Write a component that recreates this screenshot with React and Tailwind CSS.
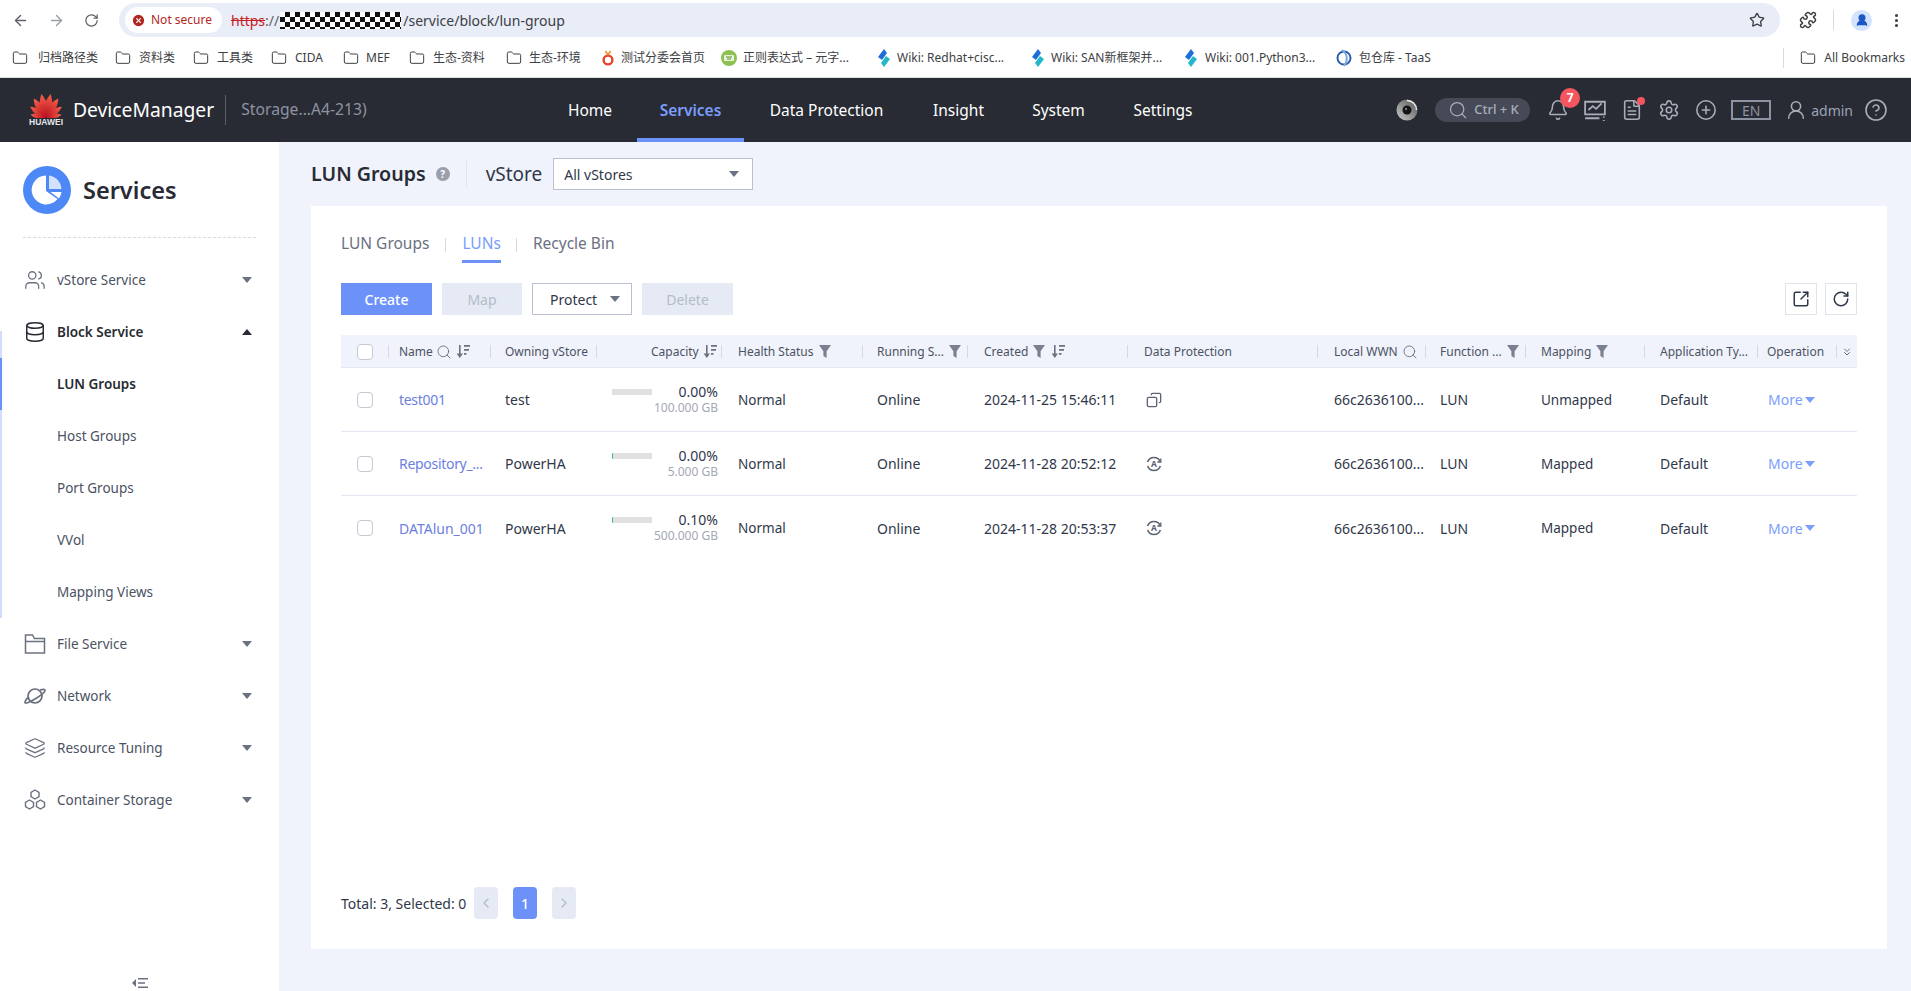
import React from 'react';
import {
  ArrowLeft, ArrowRight, RotateCw, Star, Puzzle, MoreVertical, Folder, Search, Bell,
  Settings, CirclePlus, UserRound, CircleHelp, Users, Database, Layers, FileText,
  ChevronLeft, ChevronRight, ChevronsDown, Copy, SquareArrowOutUpRight, XCircle,
} from 'lucide-react';

const cols = 'grid grid-cols-[48px_102px_106px_125px_141px_105px_160px_190px_108px_100px_119px_113px_79px_20px]';

const bookmarks = [
  { name: '归档路径类', w: 'w-[103px] gap-[10px]' },
  { name: '资料类', w: 'w-[78px] gap-[8px]' },
  { name: '工具类', w: 'w-[78px] gap-[8px]' },
  { name: 'CIDA', w: 'w-[72px] gap-[8px]' },
  { name: 'MEF', w: 'w-[66px] gap-[7px]' },
  { name: '生态-资料', w: 'w-[97px] gap-[8px]' },
  { name: '生态-环境', w: 'w-[94px] gap-[7px]' },
  { name: '测试分委会首页', w: 'w-[121px] gap-[5px]', icon: 'red' },
  { name: '正则表达式 – 元字...', w: 'w-[155px] gap-[6px]', icon: 'green' },
  { name: 'Wiki: Redhat+cisc...', w: 'w-[154px] gap-[5px]', icon: 'wiki' },
  { name: 'Wiki: SAN新框架并...', w: 'w-[153px] gap-[5px]', icon: 'wiki' },
  { name: 'Wiki: 001.Python3...', w: 'w-[153px] gap-[6px]', icon: 'wiki' },
  { name: '包仓库 - TaaS', w: 'w-[120px] gap-[7px]', icon: 'taas' },
];

const BookmarkIcon = ({ type }) => {
  if (type === 'red') {
    return (
      <svg viewBox="0 0 16 16" className="w-4 h-4 shrink-0" fill="none">
        <circle cx="8" cy="10" r="4.4" stroke="#e8402c" strokeWidth="2.4" />
        <path d="M8 5 L5.5 1 M8 5 L10.5 1" stroke="#f28b2c" strokeWidth="1.6" />
      </svg>
    );
  }
  if (type === 'green') {
    return (
      <svg viewBox="0 0 16 16" className="w-4 h-4 shrink-0">
        <circle cx="8" cy="8" r="8" fill="#8cc152" />
        <rect x="3" y="5" width="10" height="6" rx="1" fill="#e8f3da" />
        <path d="M5 7h6M6 9h4" stroke="#5b8f2a" strokeWidth="1" />
      </svg>
    );
  }
  if (type === 'wiki') {
    return (
      <svg viewBox="0 0 16 18" className="w-4 h-[18px] shrink-0">
        <path d="M8 0 L2 8 L6 11 L11 4 Z" fill="#1c6fd8" />
        <path d="M8 18 L14 10 L10 7 L5 14 Z" fill="#22b8c9" />
      </svg>
    );
  }
  if (type === 'taas') {
    return (
      <svg viewBox="0 0 16 18" className="w-4 h-[18px] shrink-0" fill="none">
        <circle cx="8" cy="9" r="6.5" stroke="#2a5db0" strokeWidth="2" />
        <path d="M6 1 C12 5 12 12 8 17" stroke="#7fa8de" strokeWidth="2" />
      </svg>
    );
  }
  return <Folder size={16} strokeWidth={1.5} className="shrink-0 text-[#3c4043]" />;
};

const BrowserBar = () => (
  <div className="h-[78px] shrink-0 bg-white border-b border-[#dcdde0]">
    <div className="h-[40px] flex items-center pr-[6px]">
      <div className="w-[119px] flex items-center pl-[12px] gap-[19px] text-[#5f6368]">
        <ArrowLeft size={17} strokeWidth={2} />
        <ArrowRight size={17} strokeWidth={2} className="text-[#9aa0a6]" />
        <RotateCw size={15} strokeWidth={2} />
      </div>
      <div className="w-[1661px] h-[34px] rounded-full bg-[#e9edf8] flex items-center pl-[6px] pr-[15px]">
        <div className="h-[26px] w-[97px] rounded-full bg-white flex items-center gap-[5px] pl-[6px] text-[12px] text-[#b3261e] whitespace-nowrap">
          <XCircle size={15} fill="#b3261e" stroke="#fff" strokeWidth={2} className="shrink-0" />
          Not secure
        </div>
        <span className="ml-[9px] text-[14px] text-[#c5221f] line-through">https</span>
        <span className="text-[14px] text-[#5f6368]">://</span>
        <span className="w-[121px] h-[17px] ml-px bg-[repeating-conic-gradient(#111_0_25%,#fff_0_50%)] bg-[length:10px_10px]" />
        <span className="ml-[2px] text-[14px] text-[#3c4043]">/service/block/lun-group</span>
        <Star size={16} strokeWidth={2} className="ml-auto text-[#3c4043]" />
      </div>
      <div className="flex-1 flex items-center pl-[19px] text-[#3c4043]">
        <Puzzle size={18} strokeWidth={2} />
        <span className="w-px h-[20px] ml-[16px] bg-[#d5dbe8]" />
        <span className="ml-[17px] w-[21px] h-[21px] rounded-full bg-[#d3e3fd] flex items-center justify-center">
          <UserRound size={14} fill="#1a56c4" stroke="#1a56c4" />
        </span>
        <MoreVertical size={17} strokeWidth={2.4} className="ml-[16px]" />
      </div>
    </div>
    <div className="h-[35px] flex items-center pl-[12px] pr-[6px] text-[12px] text-[#3c4043]">
      {bookmarks.map((b) => (
        <div key={b.name} className={`${b.w} flex items-center whitespace-nowrap`}>
          <BookmarkIcon type={b.icon} />
          <span>{b.name}</span>
        </div>
      ))}
      <span className="ml-auto w-px h-[20px] mr-[16px] bg-[#d5dbe8]" />
      <div className="flex items-center gap-2">
        <Folder size={16} strokeWidth={1.5} />
        <span>All Bookmarks</span>
      </div>
    </div>
  </div>
);

const petals = [
  { a: -80, s: 0.66 },
  { a: -56, s: 0.8 },
  { a: -33, s: 0.94 },
  { a: -11, s: 1 },
  { a: 11, s: 1 },
  { a: 33, s: 0.94 },
  { a: 56, s: 0.8 },
  { a: 80, s: 0.66 },
];

const HuaweiLogo = () => (
  <div className="w-[36px] flex flex-col items-center">
    <svg viewBox="0 0 36 25" className="w-[36px] h-[25px]">
      <defs>
        <linearGradient id="petal" x1="0" y1="0" x2="0" y2="1">
          <stop offset="0" stopColor="#f8604a" />
          <stop offset="1" stopColor="#b8101f" />
        </linearGradient>
      </defs>
      {petals.map((p) => (
        <path
          key={p.a}
          d="M0 0 C-5.4 -8, -4.6 -16, 0 -24 C4.6 -16, 5.4 -8, 0 0 Z"
          fill="url(#petal)"
          transform={`translate(18 24.5) rotate(${p.a}) scale(${p.s})`}
        />
      ))}
    </svg>
    <span className="text-[8.5px] leading-[9px] font-bold text-[#e4e5e8] font-['Liberation_Sans',sans-serif]">HUAWEI</span>
  </div>
);

const navItems = [
  { label: 'Home', w: 'w-[94px]' },
  { label: 'Services', w: 'w-[107px]', active: true },
  { label: 'Data Protection', w: 'w-[165px]' },
  { label: 'Insight', w: 'w-[99px]' },
  { label: 'System', w: 'w-[101px]' },
  { label: 'Settings', w: 'w-[108px]' },
];

const AppHeader = () => (
  <header className="h-16 shrink-0 bg-[#282b33] flex items-center text-white">
    <div className="w-[543px] flex items-center pl-[28px]">
      <HuaweiLogo />
      <span className="ml-[9px] text-[19.3px] whitespace-nowrap">DeviceManager</span>
      <span className="w-px h-[30px] ml-[11px] bg-[#5b5f6a]" />
      <span className="ml-[15px] text-[15.7px] text-[#8d93a2] whitespace-nowrap">Storage...A4-213)</span>
    </div>
    <nav className="flex h-full">
      {navItems.map((n) => (
        <div
          key={n.label}
          className={
            n.active
              ? `${n.w} flex items-center justify-center text-[15.5px] font-semibold text-[#7b9dfb] border-b-4 border-[#6c92fa] pt-[5px]`
              : `${n.w} flex items-center justify-center text-[15.5px] border-b-4 border-transparent pt-[5px]`
          }
        >
          {n.label}
        </div>
      ))}
    </nav>
    <div className="ml-auto flex items-center pr-[23px] text-[#a9aebb]">
      <svg viewBox="0 0 22 22" className="w-[22px] h-[22px]">
        <defs>
          <linearGradient id="lens" x1="1" y1="0" x2="0" y2="1">
            <stop offset="0" stopColor="#555" />
            <stop offset="1" stopColor="#c9c9c9" />
          </linearGradient>
        </defs>
        <circle cx="11" cy="11" r="10.5" fill="url(#lens)" />
        <circle cx="11" cy="11" r="4.5" fill="#141414" />
        <circle cx="10" cy="10" r="1.2" fill="#777" />
        <path d="M11 1.5A9.5 9.5 0 0 1 20.5 11" fill="none" stroke="#eee" strokeWidth="1.4" />
      </svg>
      <div className="ml-[17px] w-[95px] h-6 rounded-full bg-[#464a56] flex items-center pl-[13px] gap-[6px] text-[13px]">
        <Search size={20} strokeWidth={1.5} className="shrink-0" />
        <span className="font-medium whitespace-nowrap">Ctrl + K</span>
      </div>
      <div className="relative ml-[17px]">
        <Bell size={22} strokeWidth={1.7} />
        <span className="absolute -top-[11px] left-[13px] w-5 h-5 rounded-full bg-[#f4555e] text-white text-[12px] font-bold flex items-center justify-center">7</span>
      </div>
      <svg viewBox="0 0 20 20" className="ml-[15px] w-[22px] h-[22px]" fill="none" stroke="currentColor" strokeWidth="1.6">
        <path d="M1 14V2.5h18V14Z" />
        <path d="M4 10l4-3.5 3 2.5 5-5" />
        <path d="M1 17.5h13M18 16v1M18 19v1" />
      </svg>
      <div className="relative ml-[15px]">
        <FileText size={22} strokeWidth={1.7} />
        <span className="absolute -top-[2px] -right-[2px] w-2 h-2 rounded-full bg-[#f4555e]" />
      </div>
      <Settings size={22} strokeWidth={1.7} className="ml-[15px]" />
      <CirclePlus size={22} strokeWidth={1.7} className="ml-[15px]" />
      <div className="ml-[14px] w-10 h-5 border-2 border-[#8d93a2] flex items-center justify-center text-[14px] text-[#8d93a2]">EN</div>
      <UserRound size={22} strokeWidth={1.7} className="ml-[14px]" />
      <span className="ml-[4px] text-[14px] text-[#9aa3b8]">admin</span>
      <CircleHelp size={24} strokeWidth={1.6} className="ml-[11px]" />
    </div>
  </header>
);

const Caret = ({ up, className }) => (
  <span
    className={`w-0 h-0 border-x-[5px] border-x-transparent ${up ? 'border-b-[6px] border-b-[#282b33]' : 'border-t-[6px] border-t-[#6b7180]'} ${className || ''}`}
  />
);

const PlanetIcon = () => (
  <svg viewBox="0 0 22 18" className="w-[22px] h-[18px]" fill="none" stroke="#6b7180" strokeWidth="1.7">
    <circle cx="11" cy="9" r="7" />
    <path d="M16 3c3-1 5-1 5 .5S16 9 11 12 1 17 1 15.5 3 11 5 10" />
  </svg>
);

const HexIcon = () => (
  <svg viewBox="0 0 22 22" className="w-[22px] h-[22px]" fill="none" stroke="#6b7180" strokeWidth="1.4">
    <path d="M11 1l4 2.3v4.4L11 10 7 7.7V3.3Z" />
    <path d="M5.5 11l4 2.3v4.4l-4 2.3-4-2.3v-4.4Z" />
    <path d="M16.5 11l4 2.3v4.4l-4 2.3-4-2.3v-4.4Z" />
  </svg>
);

const FolderIcon = () => (
  <svg viewBox="0 0 22 20" className="w-[22px] h-[20px]" fill="none" stroke="#6b7180" strokeWidth="1.5">
    <path d="M1.5 19V1h7l2 3.5h10V19Z" />
    <path d="M1.5 7.5h19" />
  </svg>
);

const SideGroup = ({ icon, label, open }) => (
  <div className="h-[52px] flex items-center pl-[24px] pr-[27px]">
    <span className="w-[22px] flex justify-center shrink-0">{icon}</span>
    <span className={open ? 'ml-[11px] pt-px text-[13.5px] font-semibold text-[#282b33]' : 'ml-[11px] pt-px text-[13.5px] text-[#4b5263]'}>{label}</span>
    <Caret up={open} className="ml-auto" />
  </div>
);

const subItems = ['LUN Groups', 'Host Groups', 'Port Groups', 'VVol', 'Mapping Views'];

const Sidebar = () => (
  <aside className="w-[279px] shrink-0 bg-white flex flex-col">
    <div className="mx-[23px] h-[96px] pt-6 border-b border-dashed border-[#d8dbe2] flex items-start gap-3">
      <svg viewBox="0 0 48 48" className="w-12 h-12">
        <circle cx="24" cy="24" r="24" fill="#4d88f7" />
        <path d="M23 9.5A14.5 14.5 0 1 0 34.5 33L23 25Z" fill="#fff" />
        <path d="M26 9.5A14.5 14.5 0 0 1 38.5 23H26Z" fill="#fff" opacity="0.75" />
        <path d="M27.5 26H38.5A15 15 0 0 1 36 32.5Z" fill="#fff" />
      </svg>
      <span className="text-[23.5px] leading-[48px] font-semibold text-[#282b33]">Services</span>
    </div>
    <div className="pt-4 flex-1 flex flex-col">
      <SideGroup label="vStore Service" icon={<Users size={24} strokeWidth={1.4} className="text-[#6b7180]" />} />
      <SideGroup label="Block Service" open icon={<Database size={22} strokeWidth={1.6} className="text-[#282b33]" />} />
      <div className="border-l-2 border-[#d3dcfb] -mt-[27px] pt-[27px]">
        {subItems.map((s, i) => (
          <div
            key={s}
            className={
              i === 0
                ? 'h-[52px] -ml-[2px] border-l-2 border-[#6c92fa] pl-[55px] pt-px flex items-center text-[13.5px] font-semibold text-[#282b33]'
                : 'h-[52px] pl-[55px] pt-px flex items-center text-[13.5px] text-[#4b5263]'
            }
          >
            {s}
          </div>
        ))}
      </div>
      <SideGroup label="File Service" icon={<FolderIcon />} />
      <SideGroup label="Network" icon={<PlanetIcon />} />
      <SideGroup label="Resource Tuning" icon={<Layers size={24} strokeWidth={1.4} className="text-[#6b7180]" />} />
      <SideGroup label="Container Storage" icon={<HexIcon />} />
      <div className="mt-auto h-[16px] pt-[3px] flex justify-center">
        <svg viewBox="0 0 16 10" className="w-4 h-[10px]" fill="#6b7180">
          <path d="M0 5l4-4v8Z" />
          <path d="M6 0h10v1.6H6ZM6 4.2h7v1.6H6ZM6 8.4h10V10H6Z" />
        </svg>
      </div>
    </div>
  </aside>
);

const SortIcon = () => (
  <svg viewBox="0 0 14 13" className="w-[14px] h-[13px]" fill="#6b7180">
    <path d="M3 0h1.6v8.5L7 8.5 3.8 13 .6 8.5 3 8.5Z" />
    <path d="M8 0h6v1.8H8ZM8 4h5v1.8H8ZM8 8h2.5v1.8H8Z" />
  </svg>
);

const FilterIcon = () => (
  <svg viewBox="0 0 12 13" className="w-[12px] h-[13px]" fill="#7a8090">
    <path d="M0 0h12L7.6 6.2V13L4.4 11V6.2Z" />
  </svg>
);

const SearchIcon = () => <Search size={16} strokeWidth={1.4} className="text-[#6b7180]" />;

const headers = [
  { pad: 'pl-[16px]', check: true },
  { pad: 'pl-[10px]', label: 'Name', icons: ['search', 'sort'], gap: 'ml-[3px] gap-[4px]' },
  { pad: 'pl-[14px]', label: 'Owning vStore' },
  { pad: 'pl-[54px]', label: 'Capacity', icons: ['sort'], gap: 'ml-[4px] gap-[6px]' },
  { pad: 'pl-[16px]', label: 'Health Status', icons: ['filter'], gap: 'ml-[5px] gap-[6px]' },
  { pad: 'pl-[14px]', label: 'Running S...', icons: ['filter'], gap: 'ml-[5px] gap-[6px]' },
  { pad: 'pl-[16px]', label: 'Created', icons: ['filter', 'sort'], gap: 'ml-[5px] gap-[6px]' },
  { pad: 'pl-[16px]', label: 'Data Protection' },
  { pad: 'pl-[16px]', label: 'Local WWN', icons: ['search'], gap: 'ml-[4px] gap-[6px]' },
  { pad: 'pl-[14px]', label: 'Function ...', icons: ['filter'], gap: 'ml-[5px] gap-[6px]' },
  { pad: 'pl-[15px]', label: 'Mapping', icons: ['filter'], gap: 'ml-[5px] gap-[6px]' },
  { pad: 'pl-[15px]', label: 'Application Ty...' },
  { pad: 'pl-[9px]', label: 'Operation' },
];

const headIcon = { search: <SearchIcon />, sort: <SortIcon />, filter: <FilterIcon /> };

const rows = [
  { name: 'test001', nameCls: 'tracking-[-0.3px]', store: 'test', pct: '0.00%', size: '100.000 GB', created: '2024-11-25 15:46:11', prot: 'copy', map: 'Unmapped', used: false },
  { name: 'Repository_...', nameCls: 'tracking-[-0.3px]', store: 'PowerHA', pct: '0.00%', size: '5.000 GB', created: '2024-11-28 20:52:12', prot: 'auto', map: 'Mapped', used: true },
  { name: 'DATAlun_001', nameCls: '', store: 'PowerHA', pct: '0.10%', size: '500.000 GB', created: '2024-11-28 20:53:37', prot: 'auto', map: 'Mapped', used: true },
];

const AutoIcon = () => (
  <svg viewBox="0 0 16 16" className="w-4 h-4" fill="none" stroke="#5d6373" strokeWidth="1.6">
    <path d="M1.6 6a6.8 6.8 0 0 1 12.8 0" />
    <path d="M14.4 10a6.8 6.8 0 0 1-12.8 0" />
    <path d="M14.8 2.5V6H11.3" strokeWidth="1.3" />
    <text x="8" y="11.2" textAnchor="middle" fontSize="8.5" fontWeight="700" fill="#5d6373" stroke="none">A</text>
  </svg>
);

const Checkbox = () => <span className="block w-4 h-4 rounded-sm border border-[#c5c9d3] bg-white" />;

const LunTable = () => (
  <div className="mt-5 text-[14px] text-[#30384a]">
    <div className={`${cols} h-[33px] pt-px bg-[#f0f3fb] border-b border-[#e4e8f2] text-[12px] text-[#4b5263]`}>
      {headers.map((h, i) => (
        <div key={i} className={`${h.pad} flex items-center min-w-0 whitespace-nowrap`}>
          {h.check ? <Checkbox /> : <span>{h.label}</span>}
          {h.icons && <span className={`${h.gap} flex items-center`}>{h.icons.map((k) => <React.Fragment key={k}>{headIcon[k]}</React.Fragment>)}</span>}
          <span className="ml-auto shrink-0 w-px h-[13px] bg-[#d5d9e3]" />
        </div>
      ))}
      <div className="flex items-center justify-center text-[#6b7180]">
        <ChevronsDown size={12} strokeWidth={2} />
      </div>
    </div>
    {rows.map((r, i) => (
      <div key={r.name} className={i < rows.length - 1 ? `${cols} h-16 border-b border-[#e4e8f2] items-center` : `${cols} h-16 items-center`}>
        <div className="pl-[16px]"><Checkbox /></div>
        <div className={`pl-[10px] text-[#6c7fe0] whitespace-nowrap ${r.nameCls}`}>{r.name}</div>
        <div className="pl-[14px]">{r.store}</div>
        <div className="pl-[15px] pr-[4px] -mt-[2px] flex">
          <span className={r.used ? 'mt-[6px] w-[40px] h-[6px] bg-[#e0e0e0] border-l border-[#4cc38a]' : 'mt-[6px] w-[40px] h-[6px] bg-[#e0e0e0]'} />
          <div className="ml-auto text-right">
            <div className="leading-[18px]">{r.pct}</div>
            <div className="leading-[14px] text-[12px] text-[#a3a8b3]">{r.size}</div>
          </div>
        </div>
        <div className="pl-[16px] pt-px text-[13.5px]">Normal</div>
        <div className="pl-[14px]">Online</div>
        <div className="pl-[16px] whitespace-nowrap">{r.created}</div>
        <div className="pl-[18px]">
          {r.prot === 'copy' ? <Copy size={16} strokeWidth={2} className="text-[#5d6373] -scale-x-100" /> : <AutoIcon />}
        </div>
        <div className="pl-[16px] whitespace-nowrap">66c2636100...</div>
        <div className="pl-[14px]">LUN</div>
        <div className="pl-[15px] pt-px text-[13.5px]">{r.map}</div>
        <div className="pl-[15px]">Default</div>
        <div className="pl-[10px] flex items-center gap-[2px] text-[#7b9dfb]">
          More
          <span className="w-0 h-0 border-x-[5px] border-x-transparent border-t-[6px] border-t-[#7b9dfb]" />
        </div>
        <div />
      </div>
    ))}
  </div>
);

const Main = () => (
  <main className="flex-1 min-w-0 bg-[#f0f3fb] pl-[32px] pr-[24px] pt-4 pb-[42px] flex flex-col">
    <div className="h-8 flex items-center shrink-0">
      <h1 className="text-[19.6px] font-semibold text-[#282b33]">LUN Groups</h1>
      <span className="ml-[10px] w-[14px] h-[14px] rounded-full bg-[#9a9fab] text-white text-[10px] font-bold flex items-center justify-center">?</span>
      <span className="ml-[16px] w-px h-[26px] bg-[#e0e4ee]" />
      <span className="ml-[19px] text-[19px] text-[#30384a]">vStore</span>
      <div className="ml-[11px] w-[200px] h-8 border border-[#b8c0d2] bg-white flex items-center pl-[10px] pr-[13px] text-[14px] text-[#30384a]">
        All vStores
        <Caret className="ml-auto" />
      </div>
    </div>
    <section className="mt-4 flex-1 bg-white px-[30px] pb-[30px] flex flex-col">
      <div className="h-[57px] flex items-end text-[15.5px] text-[#6b7180] shrink-0">
        <div className="h-[35px] flex items-start">
          <span className="pt-[4px]">LUN Groups</span>
          <span className="ml-[16px] mt-[10px] w-px h-[14px] bg-[#d5d9e3]" />
          <span className="ml-[16px] h-[35px] pt-[4px] border-b-[3px] border-[#6c92fa] text-[#7b9dfb]">LUNs</span>
          <span className="ml-[15px] mt-[10px] w-px h-[14px] bg-[#d5d9e3]" />
          <span className="ml-[16px] pt-[4px]">Recycle Bin</span>
        </div>
      </div>
      <div className="mt-5 flex items-center text-[14px] shrink-0">
        <button className="w-[91px] h-8 bg-[#6c92fa] text-white font-medium">Create</button>
        <button className="ml-[10px] w-[80px] h-8 bg-[#e6eaf5] text-[#b5bcc9]">Map</button>
        <button className="ml-[10px] w-[100px] h-8 border border-[#b8c0d2] text-[#30384a] flex items-center justify-between pl-[17px] pr-[11px]">
          Protect
          <Caret />
        </button>
        <button className="ml-[10px] w-[91px] h-8 bg-[#e6eaf5] text-[#b5bcc9]">Delete</button>
        <button className="ml-auto w-8 h-8 border border-[#dfe3ec] flex items-center justify-center text-[#30384a]">
          <SquareArrowOutUpRight size={18} strokeWidth={2} />
        </button>
        <button className="ml-2 w-8 h-8 border border-[#dfe3ec] flex items-center justify-center text-[#30384a]">
          <RotateCw size={18} strokeWidth={2} />
        </button>
      </div>
      <LunTable />
      <div className="mt-auto flex items-center text-[14px] text-[#30384a]">
        <span className="w-[133px]">Total: 3, Selected: 0</span>
        <span className="w-6 h-8 bg-[#e6eaf5] rounded-sm flex items-center justify-center text-[#b5bcc9]"><ChevronLeft size={16} /></span>
        <span className="ml-[15px] w-6 h-8 bg-[#6c92fa] rounded-sm flex items-center justify-center text-white font-medium">1</span>
        <span className="ml-[15px] w-6 h-8 bg-[#e6eaf5] rounded-sm flex items-center justify-center text-[#b5bcc9]"><ChevronRight size={16} /></span>
      </div>
    </section>
  </main>
);

export default function App() {
  return (
    <div className="h-screen overflow-hidden flex flex-col font-['Noto_Sans','Noto_Sans_CJK_SC',sans-serif]">
      <BrowserBar />
      <AppHeader />
      <div className="flex-1 flex min-h-0">
        <Sidebar />
        <Main />
      </div>
    </div>
  );
}
